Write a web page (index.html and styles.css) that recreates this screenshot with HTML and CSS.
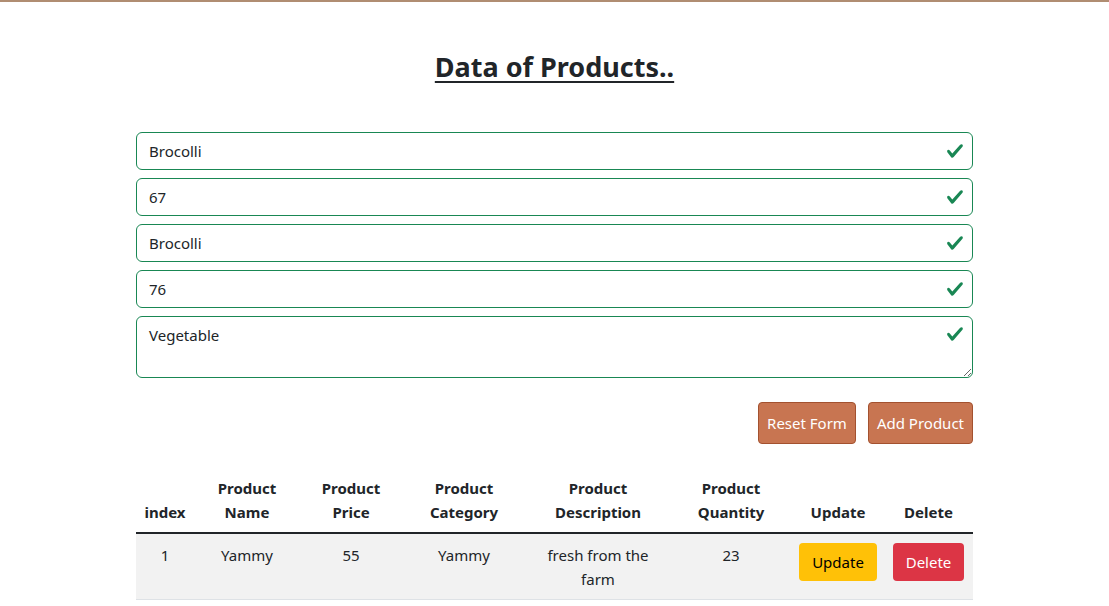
FILE: index.html
```html
<!DOCTYPE html>
<html>
<head>
<meta charset="utf-8">
<link rel="stylesheet" href="styles.css">
</head>
<body>
<div class="topbar"></div>
<main class="container">
  <h2 class="title">Data of Products..</h2>
  <form class="form">
    <div class="field">
      <input class="control" type="text" value="Brocolli">
      <svg class="valid" viewBox="0 0 8 8"><path d="M2.3 6.73.6 4.53c-.4-1.04.46-1.4 1.1-.8l1.1 1.4 3.4-3.8c.6-.63 1.6-.27 1.2.7l-4 4.6c-.43.5-.8.4-1.1.1z"/></svg>
    </div>
    <div class="field">
      <input class="control" type="text" value="67">
      <svg class="valid" viewBox="0 0 8 8"><path d="M2.3 6.73.6 4.53c-.4-1.04.46-1.4 1.1-.8l1.1 1.4 3.4-3.8c.6-.63 1.6-.27 1.2.7l-4 4.6c-.43.5-.8.4-1.1.1z"/></svg>
    </div>
    <div class="field">
      <input class="control" type="text" value="Brocolli">
      <svg class="valid" viewBox="0 0 8 8"><path d="M2.3 6.73.6 4.53c-.4-1.04.46-1.4 1.1-.8l1.1 1.4 3.4-3.8c.6-.63 1.6-.27 1.2.7l-4 4.6c-.43.5-.8.4-1.1.1z"/></svg>
    </div>
    <div class="field">
      <input class="control" type="text" value="76">
      <svg class="valid" viewBox="0 0 8 8"><path d="M2.3 6.73.6 4.53c-.4-1.04.46-1.4 1.1-.8l1.1 1.4 3.4-3.8c.6-.63 1.6-.27 1.2.7l-4 4.6c-.43.5-.8.4-1.1.1z"/></svg>
    </div>
    <div class="field">
      <textarea class="control area">Vegetable</textarea>
      <svg class="valid top" viewBox="0 0 8 8"><path d="M2.3 6.73.6 4.53c-.4-1.04.46-1.4 1.1-.8l1.1 1.4 3.4-3.8c.6-.63 1.6-.27 1.2.7l-4 4.6c-.43.5-.8.4-1.1.1z"/></svg>
    </div>
    <div class="actions">
      <button type="button" class="btn brown">Reset Form</button>
      <button type="button" class="btn brown">Add Product</button>
    </div>
  </form>
  <table class="table">
    <colgroup>
      <col class="c1"><col class="c2"><col class="c3"><col class="c4"><col class="c5"><col class="c6"><col class="c7"><col class="c8">
    </colgroup>
    <thead>
      <tr>
        <th>index</th><th>Product Name</th><th>Product Price</th><th>Product Category</th><th>Product Description</th><th>Product Quantity</th><th>Update</th><th>Delete</th>
      </tr>
    </thead>
    <tbody>
      <tr>
        <td>1</td><td>Yammy</td><td>55</td><td>Yammy</td><td>fresh from the farm</td><td>23</td>
        <td><button type="button" class="btn sm warn">Update</button></td>
        <td><button type="button" class="btn sm danger">Delete</button></td>
      </tr>
    </tbody>
  </table>
</main>
</body>
</html>
```

FILE: styles.css
```css
* { box-sizing: border-box; }
html, body { margin: 0; padding: 0; }
body {
  font-family: "Noto Sans", "Open Sans", sans-serif;
  font-size: 15px;
  line-height: 24px;
  color: #212529;
  background: #fff;
}
.topbar { height: 2px; background: #b08d72; }
.container { width: 837px; margin: 0 auto; }
.title {
  margin: 0;
  padding-top: 45px;
  padding-bottom: 45px;
  text-align: center;
  font-size: 27px;
  line-height: 40px;
  font-weight: 700;
  text-decoration: underline;
  text-underline-offset: 4px;
  text-decoration-thickness: 2px;
}
.form { display: flex; flex-direction: column; gap: 8px; }
.field { position: relative; }
.control {
  display: block;
  width: 100%;
  height: 38px;
  padding: 6px 40px 6px 12px;
  border: 1px solid #198754;
  border-radius: 6px;
  font: inherit;
  color: #212529;
  background: #fff;
  outline: none;
}
.area { height: 62px; resize: vertical; }
.valid {
  position: absolute;
  right: 9px;
  top: 10px;
  width: 18px;
  height: 18px;
  fill: #198754;
}
.valid.top { top: 9px; }
.actions {
  display: flex;
  justify-content: flex-end;
  gap: 12px;
  margin-top: 16px;
}
.btn {
  font: inherit;
  line-height: 24px;
  border-radius: 4px;
  cursor: pointer;
}
.brown {
  padding: 8px 8px;
  background: #c87551;
  border: 1px solid #a3512f;
  color: #fff;
}
.table {
  width: 837px;
  margin-top: 24px;
  border-collapse: collapse;
  table-layout: fixed;
}
.c1 { width: 58px; }
.c2 { width: 106px; }
.c3 { width: 102px; }
.c4 { width: 124px; }
.c5 { width: 144px; }
.c6 { width: 122px; }
.c7 { width: 92px; }
.c8 { width: 89px; }
.table th, .table td {
  padding: 8px 6px;
  text-align: center;
}
.table th {
  vertical-align: bottom;
  font-weight: 700;
  border-bottom: 2px solid #212529;
}
.table td {
  vertical-align: top;
  background: #f2f2f2;
  border-bottom: 1px solid #dee2e6;
  padding-top: 9px;
}
.btn.sm {
  padding: 6px 12px;
  border: 1px solid transparent;
  border-radius: 4px;
}
.warn { background: #ffc107; border-color: #ffc107; color: #000; }
.danger { background: #dc3545; border-color: #dc3545; color: #fff; }
```
